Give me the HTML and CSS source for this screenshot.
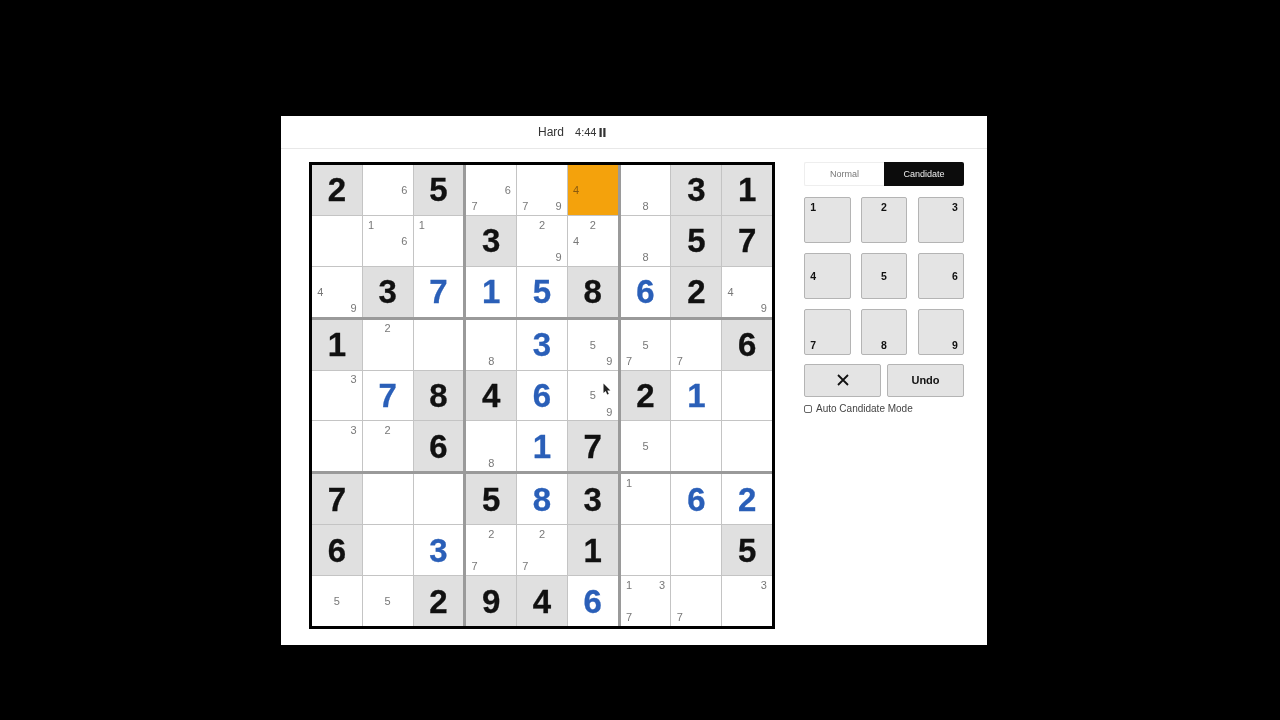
FILE: index.html
```html
<!DOCTYPE html>
<html lang="en">
<head>
<meta charset="utf-8">
<title>Sudoku</title>
<link rel="stylesheet" href="styles.css">
</head>
<body>
<div class="window">
  <header class="top">
    <span class="level">Hard</span>
    <span class="timer">4:44</span>
    <svg class="pause" width="7" height="9" viewBox="0 0 7 9"><path d="M0.5 0h2.2v9H0.5zM4.3 0h2.2v9H4.3z" fill="#333"/></svg>
  </header>
  <main class="main">
    <div class="board">
      <div class="box">
        <div class="cell given">2</div>
        <div class="cell"><span class="n6">6</span></div>
        <div class="cell given">5</div>
        <div class="cell"></div>
        <div class="cell"><span class="n1">1</span><span class="n6">6</span></div>
        <div class="cell"><span class="n1">1</span></div>
        <div class="cell"><span class="n4">4</span><span class="n9">9</span></div>
        <div class="cell given">3</div>
        <div class="cell solved">7</div>
      </div>
      <div class="box">
        <div class="cell"><span class="n6">6</span><span class="n7">7</span></div>
        <div class="cell"><span class="n7">7</span><span class="n9">9</span></div>
        <div class="cell active"><span class="n4">4</span></div>
        <div class="cell given">3</div>
        <div class="cell"><span class="n2">2</span><span class="n9">9</span></div>
        <div class="cell"><span class="n2">2</span><span class="n4">4</span></div>
        <div class="cell solved">1</div>
        <div class="cell solved">5</div>
        <div class="cell given">8</div>
      </div>
      <div class="box">
        <div class="cell"><span class="n8">8</span></div>
        <div class="cell given">3</div>
        <div class="cell given">1</div>
        <div class="cell"><span class="n8">8</span></div>
        <div class="cell given">5</div>
        <div class="cell given">7</div>
        <div class="cell solved">6</div>
        <div class="cell given">2</div>
        <div class="cell"><span class="n4">4</span><span class="n9">9</span></div>
      </div>
      <div class="box">
        <div class="cell given">1</div>
        <div class="cell"><span class="n2">2</span></div>
        <div class="cell"></div>
        <div class="cell"><span class="n3">3</span></div>
        <div class="cell solved">7</div>
        <div class="cell given">8</div>
        <div class="cell"><span class="n3">3</span></div>
        <div class="cell"><span class="n2">2</span></div>
        <div class="cell given">6</div>
      </div>
      <div class="box">
        <div class="cell"><span class="n8">8</span></div>
        <div class="cell solved">3</div>
        <div class="cell"><span class="n5">5</span><span class="n9">9</span></div>
        <div class="cell given">4</div>
        <div class="cell solved">6</div>
        <div class="cell pointer-cell"><span class="n5">5</span><span class="n9">9</span>
          <svg class="cursor" width="8" height="13" viewBox="0 0 8 13"><path d="M0.5 0.5V10l2.2-2 1.5 3.6 1.6-.7L4.3 7.4H7.4z" fill="#222"/></svg>
        </div>
        <div class="cell"><span class="n8">8</span></div>
        <div class="cell solved">1</div>
        <div class="cell given">7</div>
      </div>
      <div class="box">
        <div class="cell"><span class="n5">5</span><span class="n7">7</span></div>
        <div class="cell"><span class="n7">7</span></div>
        <div class="cell given">6</div>
        <div class="cell given">2</div>
        <div class="cell solved">1</div>
        <div class="cell"></div>
        <div class="cell"><span class="n5">5</span></div>
        <div class="cell"></div>
        <div class="cell"></div>
      </div>
      <div class="box">
        <div class="cell given">7</div>
        <div class="cell"></div>
        <div class="cell"></div>
        <div class="cell given">6</div>
        <div class="cell"></div>
        <div class="cell solved">3</div>
        <div class="cell"><span class="n5">5</span></div>
        <div class="cell"><span class="n5">5</span></div>
        <div class="cell given">2</div>
      </div>
      <div class="box">
        <div class="cell given">5</div>
        <div class="cell solved">8</div>
        <div class="cell given">3</div>
        <div class="cell"><span class="n2">2</span><span class="n7">7</span></div>
        <div class="cell"><span class="n2">2</span><span class="n7">7</span></div>
        <div class="cell given">1</div>
        <div class="cell given">9</div>
        <div class="cell given">4</div>
        <div class="cell solved">6</div>
      </div>
      <div class="box">
        <div class="cell"><span class="n1">1</span></div>
        <div class="cell solved">6</div>
        <div class="cell solved">2</div>
        <div class="cell"></div>
        <div class="cell"></div>
        <div class="cell given">5</div>
        <div class="cell"><span class="n1">1</span><span class="n3">3</span><span class="n7">7</span></div>
        <div class="cell"><span class="n7">7</span></div>
        <div class="cell"><span class="n3">3</span></div>
      </div>
    </div>
    <aside class="panel">
      <div class="modes">
        <button class="mode" type="button">Normal</button>
        <button class="mode mode-on" type="button">Candidate</button>
      </div>
      <div class="keys">
        <button class="key" type="button"><span class="n1">1</span></button>
        <button class="key" type="button"><span class="n2">2</span></button>
        <button class="key" type="button"><span class="n3">3</span></button>
        <button class="key" type="button"><span class="n4">4</span></button>
        <button class="key" type="button"><span class="n5">5</span></button>
        <button class="key" type="button"><span class="n6">6</span></button>
        <button class="key" type="button"><span class="n7">7</span></button>
        <button class="key" type="button"><span class="n8">8</span></button>
        <button class="key" type="button"><span class="n9">9</span></button>
      </div>
      <div class="actions">
        <button class="action" type="button" aria-label="Erase">
          <svg width="12" height="12" viewBox="0 0 12 12"><path d="M1 1l10 10M11 1L1 11" stroke="#111" stroke-width="1.8" fill="none"/></svg>
        </button>
        <button class="action" type="button">Undo</button>
      </div>
      <label class="auto"><input class="check" type="checkbox">Auto Candidate Mode</label>
    </aside>
  </main>
</div>
</body>
</html>
```
FILE: styles.css
```css
* { box-sizing: border-box; }
html, body { height: 100%; }
body {
  margin: 0;
  background: #000;
  padding: 116px 0 0 281px;
  font-family: "Liberation Sans", Arial, sans-serif;
  overflow: hidden;
}
.window {
  width: 706px;
  height: 529px;
  background: #fff;
  filter: blur(0.3px);
}
.top {
  height: 33px;
  border-bottom: 1px solid #e8e8e8;
  display: flex;
  align-items: center;
  padding-left: 257px;
  font-size: 12px;
  color: #333;
}
.level { margin-right: 11px; }
.timer { font-size: 11px; margin-right: 3px; }
.pause { display: block; }
.main {
  display: flex;
  align-items: flex-start;
  padding: 13px 0 0 28px;
  gap: 29px;
}
.board {
  width: 466px;
  height: 467px;
  border: 3px solid #000;
  background: #9a9a9a;
  display: grid;
  grid-template-columns: repeat(3, 1fr);
  grid-template-rows: repeat(3, 1fr);
  gap: 3px;
}
.box {
  background: #c4c4c4;
  display: grid;
  grid-template-columns: repeat(3, 1fr);
  grid-template-rows: repeat(3, 1fr);
  gap: 1px;
  min-width: 0;
  min-height: 0;
}
.cell {
  background: #fff;
  display: grid;
  grid-template-columns: repeat(3, 1fr);
  grid-template-rows: repeat(3, 1fr);
  align-items: center;
  justify-items: center;
  padding-top: 1px;
  font-size: 11px;
  line-height: 1;
  color: #787878;
  min-width: 0;
  min-height: 0;
  position: relative;
}
.given, .solved {
  display: flex;
  justify-content: center;
  align-items: center;
  padding-top: 0;
  font-size: 33px;
  font-weight: 700;
  -webkit-text-stroke: 0.3px currentColor;
}
.given { background: #e0e0e0; color: #111; }
.solved { color: #2a5fb8; }
.active { background: #f4a20c; color: #8a5a10; }
.n1 { grid-area: 1 / 1; }
.n2 { grid-area: 1 / 2; }
.n3 { grid-area: 1 / 3; }
.n4 { grid-area: 2 / 1; }
.n5 { grid-area: 2 / 2; }
.n6 { grid-area: 2 / 3; }
.n7 { grid-area: 3 / 1; }
.n8 { grid-area: 3 / 2; }
.n9 { grid-area: 3 / 3; }
.cursor {
  position: absolute;
  left: 35px;
  top: 12px;
}
.panel {
  width: 160px;
  display: flex;
  flex-direction: column;
}
.modes {
  display: flex;
  height: 24px;
}
.mode {
  flex: 0 0 50%;
  border: 1px solid #eee;
  border-right: 0;
  background: #fff;
  color: #777;
  font: 9px "Liberation Sans", Arial, sans-serif;
  padding: 0;
  border-radius: 2px 0 0 2px;
}
.mode-on {
  background: #0c0c0c;
  border: 0;
  color: #eee;
  border-radius: 0 2px 2px 0;
}
.keys {
  display: grid;
  grid-template-columns: repeat(3, 46.5px);
  grid-template-rows: repeat(3, 46px);
  justify-content: space-between;
  row-gap: 10px;
  margin-top: 11px;
}
.key {
  display: grid;
  grid-template-columns: repeat(3, 1fr);
  grid-template-rows: repeat(3, 1fr);
  align-items: center;
  justify-items: center;
  padding: 2px 1px;
  background: #e4e4e4;
  border: 1px solid #b4b4b4;
  border-radius: 2px;
  font: 700 10.5px "Liberation Sans", Arial, sans-serif;
  color: #111;
}
.actions {
  display: flex;
  gap: 6px;
  margin-top: 9px;
}
.action {
  flex: 1;
  height: 32.5px;
  display: flex;
  align-items: center;
  justify-content: center;
  padding: 0;
  background: #e4e4e4;
  border: 1px solid #b4b4b4;
  border-radius: 2px;
  font: 700 11px "Liberation Sans", Arial, sans-serif;
  color: #111;
}
.auto {
  display: flex;
  align-items: center;
  margin-top: 5px;
  font-size: 10px;
  color: #444;
  height: 14px;
}
.check {
  appearance: none;
  width: 8px;
  height: 8px;
  margin: 0 4px 0 0;
  border: 1px solid #666;
  border-radius: 2px;
  background: #fff;
}
```
